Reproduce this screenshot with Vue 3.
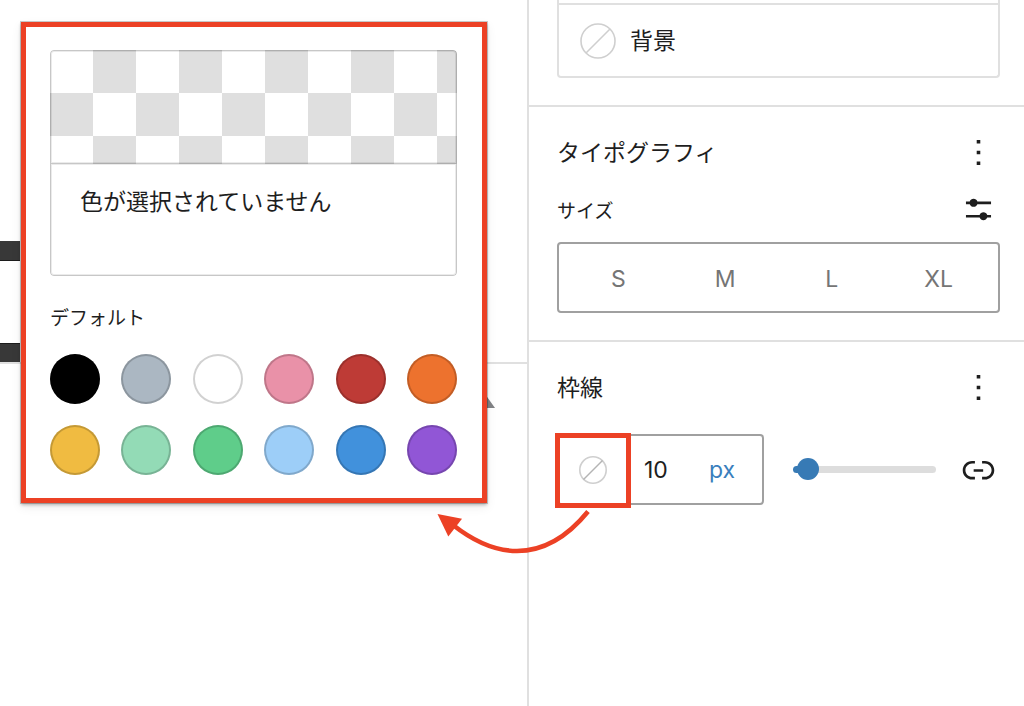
<script setup>
import { ref } from 'vue'

const swatches = [
  { name: '黒', color: '#000000' },
  { name: 'シアンがかったグレー', color: '#abb7c2' },
  { name: '白', color: '#ffffff' },
  { name: '淡いピンク', color: '#e991a8' },
  { name: '鮮やかな赤', color: '#be3b36' },
  { name: '明るく鮮やかなオレンジ', color: '#ed722e' },
  { name: '明るく鮮やかな琥珀', color: '#f0bb41' },
  { name: '薄い緑', color: '#93dbb6' },
  { name: '鮮やかな緑', color: '#5fcd8a' },
  { name: '淡いシアン', color: '#9dcef8' },
  { name: '鮮やかなシアン', color: '#4191dc' },
  { name: '鮮やかな紫', color: '#9156d6' },
]
const sizes = ['S', 'M', 'L', 'XL']
const width = ref(10)
const unit = ref('px')
</script>

<template>
  <div class="editor">
    <main class="canvas">
      <div class="bar bar-upper"></div>
      <div class="bar bar-lower"></div>
      <div class="canvas-rule"></div>
      <svg class="caret" width="20" height="14" viewBox="0 0 20 14" aria-hidden="true">
        <path d="M10 0L20 14H0z" fill="#828386" />
      </svg>

      <section class="popover" aria-label="カラーパレット">
        <div class="preview">
          <button class="checker" type="button" aria-label="カスタムカラー"></button>
          <p class="preview-text">色が選択されていません</p>
        </div>
        <h3 class="palette-title">デフォルト</h3>
        <div class="swatches">
          <button
            v-for="s in swatches"
            :key="s.name"
            class="swatch"
            type="button"
            :aria-label="s.name"
            :style="{ backgroundColor: s.color }"
          ></button>
        </div>
      </section>
    </main>

    <aside class="sidebar">
      <section class="panel panel-color">
        <div class="color-list">
          <div class="color-tail"></div>
          <button class="color-row" type="button">
            <svg width="36" height="36" viewBox="0 0 36 36" fill="none" stroke="#cfcfcf" aria-hidden="true">
              <circle cx="18" cy="18" r="17" stroke-width="1.6" />
              <path d="M6 30L30 6" stroke-width="1.6" />
            </svg>
            <span>背景</span>
          </button>
        </div>
      </section>

      <section class="panel">
        <header class="panel-head">
          <h2>タイポグラフィ</h2>
          <button class="icon-button" type="button" aria-label="タイポグラフィのオプション">
            <svg width="43" height="43" viewBox="0 0 24 24" aria-hidden="true">
              <path d="M13 19h-2v-2h2v2zm0-6h-2v-2h2v2zm0-6h-2V5h2v2z" />
            </svg>
          </button>
        </header>
        <div class="size-head">
          <h3>サイズ</h3>
          <button class="icon-button" type="button" aria-label="カスタムサイズを設定">
            <svg width="43" height="43" viewBox="0 0 24 24" aria-hidden="true">
              <path d="m19 7.5h-7.628c-.3089-.87389-1.1423-1.5-2.122-1.5-.97966 0-1.81309.62611-2.12197 1.5h-2.12803v1.5h2.12803c.30888.87389 1.14231 1.5 2.12197 1.5.9797 0 1.8131-.62611 2.122-1.5h7.628z" />
              <path d="m19 15h-2.128c-.3089-.8739-1.1423-1.5-2.122-1.5s-1.8131.6261-2.122 1.5h-7.628v1.5h7.628c.3089.8739 1.1423 1.5 2.122 1.5s1.8131-.6261 2.122-1.5h2.128z" />
            </svg>
          </button>
        </div>
        <div class="size-group" role="group" aria-label="サイズ">
          <button v-for="s in sizes" :key="s" type="button">{{ s }}</button>
        </div>
      </section>

      <section class="panel panel-last">
        <header class="panel-head">
          <h2>枠線</h2>
          <button class="icon-button" type="button" aria-label="枠線のオプション">
            <svg width="43" height="43" viewBox="0 0 24 24" aria-hidden="true">
              <path d="M13 19h-2v-2h2v2zm0-6h-2v-2h2v2zm0-6h-2V5h2v2z" />
            </svg>
          </button>
        </header>
        <div class="border-row">
          <div class="unit-box">
            <button class="border-color" type="button" aria-label="枠線の色">
              <svg width="28" height="28" viewBox="0 0 28 28" fill="none" aria-hidden="true">
                <circle cx="14" cy="14" r="13.2" stroke="#cfcfcf" stroke-width="1.6" />
                <path d="M4.5 23.5L23.5 4.5" stroke="#b4b4b4" stroke-width="1.4" />
              </svg>
            </button>
            <input v-model="width" class="width-input" type="text" inputmode="numeric" aria-label="枠線の幅" />
            <select v-model="unit" class="unit-select" aria-label="単位">
              <option>px</option>
              <option>em</option>
              <option>rem</option>
            </select>
            <div class="highlight"></div>
            <svg class="arrow" width="160" height="52" viewBox="434 506 160 52" aria-hidden="true">
              <path d="M588 511.500C568 536 545 551 517 551C493 551 472 540 453 525" fill="none" stroke="#ec4125" stroke-width="4.600" />
              <path d="M437.500 514L462 518.800L448.300 536.500z" fill="#ec4125" />
            </svg>
          </div>
          <input v-model="width" class="slider" type="range" min="0" max="300" aria-label="枠線の幅スライダー" />
          <button class="icon-button" type="button" aria-label="辺のリンクを解除">
            <svg width="43" height="43" viewBox="0 0 24 24" aria-hidden="true">
              <path d="M15.6 7.200H14v1.500h1.600c2 0 3.700 1.700 3.700 3.700s-1.700 3.700-3.700 3.700H14v1.500h1.600c2.800 0 5.200-2.300 5.200-5.200 0-2.900-2.300-5.200-5.200-5.200zM4.700 12.400c0-2 1.700-3.700 3.700-3.700H10V7.200H8.400c-2.900 0-5.200 2.300-5.200 5.200 0 2.900 2.300 5.200 5.200 5.200H10v-1.500H8.400c-2 0-3.700-1.700-3.700-3.700zm4.600.9h5.300v-1.500H9.300v1.500z" />
            </svg>
          </button>
        </div>
      </section>
    </aside>
  </div>
</template>

<style>
body {
  margin: 0;
  background: #fff;
}
</style>

<style scoped>
.editor {
  --red: #ec4125;
  --ink: #1e1e1e;
  --line: #e0e0e0;
  display: grid;
  grid-template-columns: 527fr 497fr;
  min-height: 100vh;
  font-family: Inter, "Noto Sans CJK JP", sans-serif;
  font-size: 23px;
  line-height: 32px;
  color: var(--ink);
}

.editor * {
  box-sizing: border-box;
}

button,
input,
select {
  margin: 0;
  padding: 0;
  border: 0;
  border-radius: 0;
  background: none;
  font: inherit;
  color: inherit;
}

h2,
h3,
p {
  margin: 0;
  font-size: 23px;
  font-weight: 400;
}

h3 {
  font-size: 19px;
}

svg {
  display: block;
}

.canvas {
  position: relative;
  padding-top: 241px;
}

.bar {
  width: 20px;
  height: 20px;
  background: #383838;
}

.bar-upper {
  border-bottom: 1px solid #1c1c1c;
}

.bar-lower {
  height: 19px;
  margin-top: 82px;
  border-top: 1px solid #1c1c1c;
}

.canvas-rule {
  height: 2px;
  background: var(--line);
}

.caret {
  margin: 30px 32px 0 auto;
}

.popover {
  position: absolute;
  top: 22px;
  left: 21px;
  right: 40px;
  padding: 23px 25px 23px 24px;
  border: 5px solid var(--red);
  background: #fff;
  box-shadow: 0 0 0 1px rgba(0, 0, 0, 0.2), 0 2px 3px rgba(0, 0, 0, 0.25), 0 4px 10px rgba(0, 0, 0, 0.08);
}

.preview {
  border-radius: 4px;
  overflow: hidden;
}

.checker {
  display: block;
  width: 100%;
  height: 114px;
  border: 1px solid rgba(0, 0, 0, 0.22);
  border-radius: 4px 4px 0 0;
  background: repeating-conic-gradient(#dfdfdf 0 25%, #fff 0 50%) border-box 0 0 / 86px 86px;
  box-shadow: inset 0 0 0 1px rgba(0, 0, 0, 0.08);
}

.preview-text {
  height: 112px;
  padding: 22px 29px;
  border: 1px solid #c7c7c7;
  border-top: 0;
  border-radius: 0 0 4px 4px;
  box-shadow: inset 0 0 0 1px rgba(0, 0, 0, 0.08);
}

.palette-title {
  margin: 27px 0 19px;
}

.swatches {
  display: grid;
  grid-template-columns: repeat(6, 50px);
  justify-content: space-between;
  row-gap: 21px;
}

.swatch {
  height: 50px;
  border-radius: 50%;
  box-shadow: inset 0 0 0 2px rgba(0, 0, 0, 0.18);
}

.sidebar {
  border-left: 2px solid var(--line);
}

.panel {
  padding: 24px 24px 27px 28px;
  border-bottom: 2px solid var(--line);
}

.panel-color {
  padding-top: 0;
}

.panel-last {
  border-bottom: 0;
}

.color-list {
  border: 2px solid var(--line);
  border-top: 0;
  border-radius: 0 0 4px 4px;
}

.color-tail {
  height: 3px;
}

.color-row {
  display: flex;
  align-items: center;
  gap: 14px;
  width: 100%;
  height: 73px;
  padding-left: 21px;
  border-top: 2px solid var(--line);
}

.panel-head,
.size-head {
  display: flex;
  align-items: center;
  justify-content: space-between;
}

.size-head {
  margin: 14px 0 11px;
}

.size-head h3 {
  padding-top: 4px;
}

.icon-button {
  flex: none;
  fill: var(--ink);
}

.size-group {
  display: grid;
  grid-template-columns: repeat(4, 1fr);
  height: 71px;
  padding: 2px 6px 0;
  border: 2px solid #a0a0a0;
  border-radius: 4px;
  color: #757575;
}

.border-row {
  display: flex;
  align-items: center;
  margin-top: 25px;
}

.unit-box {
  position: relative;
  display: flex;
  align-items: center;
  flex: none;
  width: 207px;
  height: 71px;
  border: 2px solid #a0a0a0;
  border-radius: 4px;
}

.border-color {
  display: grid;
  place-items: center;
  width: 68px;
  height: 67px;
}

.width-input {
  flex: 1;
  min-width: 0;
  padding-left: 17px;
}

.unit-select {
  appearance: none;
  width: 53px;
  color: #3a7fbd;
}

.highlight {
  position: absolute;
  top: -3px;
  left: -4px;
  width: 76px;
  height: 75px;
  border: 5px solid var(--red);
  pointer-events: none;
}

.arrow {
  position: absolute;
  top: 70px;
  left: -125px;
  pointer-events: none;
}

.slider {
  appearance: none;
  flex: 1;
  min-width: 0;
  height: 22px;
  margin: 0 21px 0 29px;
}

.slider::-webkit-slider-runnable-track {
  height: 7px;
  border-radius: 4px;
  background: linear-gradient(to right, #377ab5 10%, #dddddd 10%);
}

.slider::-webkit-slider-thumb {
  appearance: none;
  width: 22px;
  height: 22px;
  margin-top: -8px;
  border-radius: 50%;
  background: #377ab5;
}
</style>
